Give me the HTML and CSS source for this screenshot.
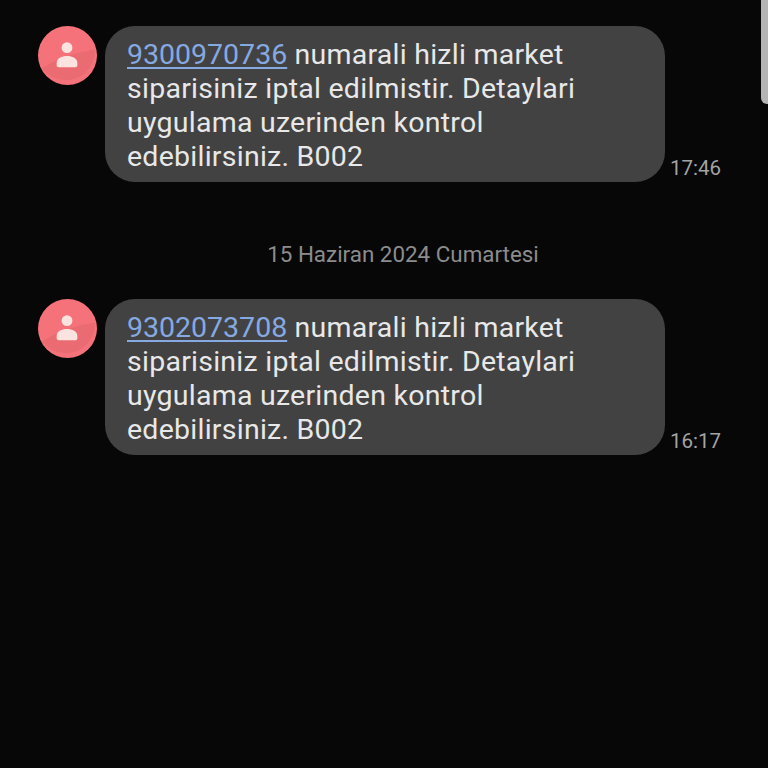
FILE: index.html
```html
<!DOCTYPE html>
<html lang="en">
<head>
	<meta charset="UTF-8">
	<title>Mesajlar</title>
	<link rel="stylesheet" href="styles.css">
</head>
<body>
	<div id="wrapper">
		<div class="scrollbar"></div>

		<div class="message">
			<div class="avatar">
				<svg viewBox="0 0 60 60" width="59" height="59">
					<path class="shade" d="M4 43 C 20 33, 40 27, 58 24 A 30 30 0 0 1 4 43 Z"/>
					<circle class="person" cx="29.5" cy="22" r="5.5"/>
					<path class="person" d="M21 42 C19.5 42 19 41 19 40 V37.5 C19 33 24 30.5 29.5 30.5 C35 30.5 40 33 40 37.5 V40 C40 41 39.5 42 38 42 Z"/>
				</svg>
			</div>
			<div class="bubble"><a href="#">9300970736</a> numarali hizli market siparisiniz iptal edilmistir. Detaylari uygulama uzerinden kontrol edebilirsiniz. B002</div>
			<div class="time">17:46</div>
		</div>

		<div class="date">15 Haziran 2024 Cumartesi</div>

		<div class="message">
			<div class="avatar">
				<svg viewBox="0 0 60 60" width="59" height="59">
					<path class="shade" d="M4 43 C 20 33, 40 27, 58 24 A 30 30 0 0 1 4 43 Z"/>
					<circle class="person" cx="29.5" cy="22" r="5.5"/>
					<path class="person" d="M21 42 C19.5 42 19 41 19 40 V37.5 C19 33 24 30.5 29.5 30.5 C35 30.5 40 33 40 37.5 V40 C40 41 39.5 42 38 42 Z"/>
				</svg>
			</div>
			<div class="bubble"><a href="#">9302073708</a> numarali hizli market siparisiniz iptal edilmistir. Detaylari uygulama uzerinden kontrol edebilirsiniz. B002</div>
			<div class="time">16:17</div>
		</div>
	</div>
</body>
</html>
```

FILE: styles.css
```css
html, body {
	margin: 0;
	height: 100%;
	background-color: #070707;
	font-family: Roboto, sans-serif;
}
#wrapper {
	position: relative;
	height: 768px;
	padding: 26px 0 0 38px;
	box-sizing: border-box;
	overflow: hidden;
}
.scrollbar {
	position: absolute;
	top: -8px;
	right: -8px;
	width: 15px;
	height: 112px;
	background-color: #b4b4b4;
	border-radius: 6px;
}
.message {
	display: flex;
	align-items: flex-end;
}
.avatar {
	align-self: flex-start;
	width: 59px;
	height: 59px;
	margin-right: 8px;
	border-radius: 50%;
	overflow: hidden;
	background-color: #f5727a;
}
.avatar svg {
	display: block;
}
.shade {
	fill: #ea6b72;
}
.person {
	fill: #fbe3e0;
}
.bubble {
	width: 560px;
	height: 156px;
	padding: 12px 30px 0 22px;
	box-sizing: border-box;
	background-color: #424242;
	border-radius: 30px;
	color: #e8e8e8;
	font-size: 28.5px;
	line-height: 34px;
	letter-spacing: 0.25px;
}
.bubble a {
	color: #86a9e2;
	letter-spacing: 0;
	text-decoration: underline;
	text-underline-offset: 3px;
	text-decoration-thickness: 2px;
}
.time {
	margin: 0 0 2px 5px;
	color: #a3a3a3;
	font-size: 20.5px;
	line-height: 24px;
}
.date {
	width: 730px;
	margin: 60px 0 32px;
	color: #8c8c8c;
	font-size: 22.4px;
	line-height: 25px;
	text-align: center;
}
```
